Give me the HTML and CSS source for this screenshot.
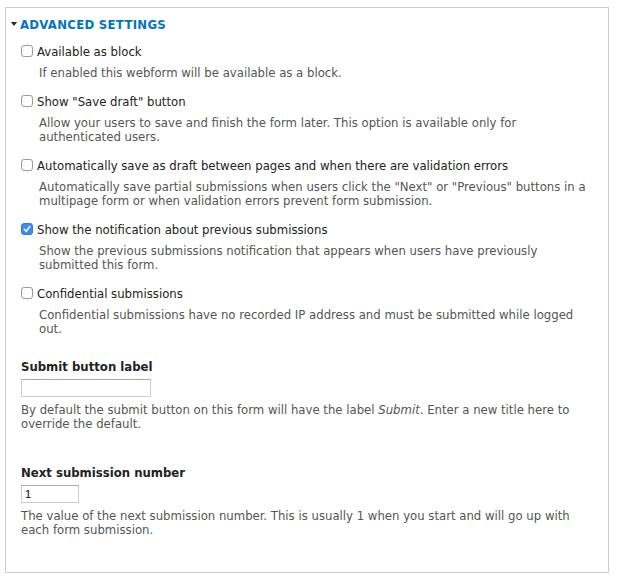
FILE: index.html
```html
<!DOCTYPE html>
<html lang="en">
<head>
    <meta charset="UTF-8">
    <title>Advanced settings</title>
    <link rel="stylesheet" href="styles.css">
</head>
<body>
    <div class="details">
        <div class="summary"><span class="arrow"></span>Advanced settings</div>
        <div class="wrapper">
            <div class="option">
                <label class="check-label"><span class="box"></span>Available as block</label>
                <div class="desc">If enabled this webform will be available as a block.</div>
            </div>
            <div class="option">
                <label class="check-label"><span class="box"></span>Show "Save draft" button</label>
                <div class="desc">Allow your users to save and finish the form later. This option is available only for authenticated users.</div>
            </div>
            <div class="option">
                <label class="check-label"><span class="box"></span>Automatically save as draft between pages and when there are validation errors</label>
                <div class="desc">Automatically save partial submissions when users click the "Next" or "Previous" buttons in a multipage form or when validation errors prevent form submission.</div>
            </div>
            <div class="option">
                <label class="check-label"><span class="box checked"><svg width="12" height="12" viewBox="0 0 12 12"><path d="M3.3 6.3 L5.2 8.3 L8.8 3.6" fill="none" stroke="#fff" stroke-width="1.6" stroke-linecap="round" stroke-linejoin="round"/></svg></span>Show the notification about previous submissions</label>
                <div class="desc">Show the previous submissions notification that appears when users have previously submitted this form.</div>
            </div>
            <div class="option">
                <label class="check-label"><span class="box"></span>Confidential submissions</label>
                <div class="desc">Confidential submissions have no recorded IP address and must be submitted while logged out.</div>
            </div>

            <div class="field">
                <label class="field-label">Submit button label</label>
                <input type="text" class="text-input wide">
                <div class="field-desc">By default the submit button on this form will have the label <em>Submit</em>. Enter a new title here to override the default.</div>
            </div>

            <div class="field field-next">
                <label class="field-label">Next submission number</label>
                <input type="text" class="text-input narrow" value="1">
                <div class="field-desc">The value of the next submission number. This is usually 1 when you start and will go up with each form submission.</div>
            </div>
        </div>
    </div>
</body>
</html>
```

FILE: styles.css
```css
body {
    margin: 0;
    padding: 7px 11px 6px 5px;
    background: #fff;
    font-family: "DejaVu Sans Condensed", "DejaVu Sans", sans-serif;
    color: #222;
}
.details {
    border: 1px solid #ccc;
    box-sizing: border-box;
    height: 566px;
    padding: 6px 9px 0 15px;
}
.summary {
    display: flex;
    align-items: center;
    height: 20px;
    color: #0074bd;
    font-weight: bold;
    font-size: 13px;
    text-transform: uppercase;
    letter-spacing: 0.3px;
    margin-left: -10px;
}
.arrow {
    width: 0;
    height: 0;
    border-left: 3.5px solid transparent;
    border-right: 3.5px solid transparent;
    border-top: 4px solid #222;
    margin: 0 3px 0 0;
}
.wrapper {
    padding-top: 8px;
}
.option {
    margin-bottom: 12px;
}
.check-label {
    display: flex;
    align-items: center;
    height: 18px;
    font-size: 13px;
    color: #222;
}
.box {
    flex: none;
    width: 10px;
    height: 10px;
    border: 1px solid #9a9a9a;
    border-radius: 3px;
    margin: 0 4px 0 0;
    background: #fff;
    position: relative;
}
.box.checked {
    background: #3b8df0;
    border-color: #2f7bd9;
}
.box svg {
    position: absolute;
    left: -1px;
    top: -1px;
}
.desc {
    margin: 6px 0 0 18px;
    font-size: 13px;
    line-height: 14px;
    color: #555;
}
.field {
    margin-top: 22px;
}
.field-next {
    margin-top: 33px;
}
.field-label {
    display: block;
    height: 18px;
    line-height: 18px;
    font-weight: bold;
    font-size: 13px;
    color: #222;
    margin-bottom: 3px;
}
.text-input {
    display: block;
    box-sizing: border-box;
    height: 18px;
    border: 1px solid #ccc;
    border-top-color: #a9a9a9;
    padding: 0 3px;
    font-family: "Liberation Sans", sans-serif;
    font-size: 11px;
    color: #000;
    margin: 0;
}
.wide {
    width: 130px;
}
.narrow {
    width: 58px;
}
.field-desc {
    margin-top: 6px;
    font-size: 13px;
    line-height: 14px;
    color: #555;
}
```
